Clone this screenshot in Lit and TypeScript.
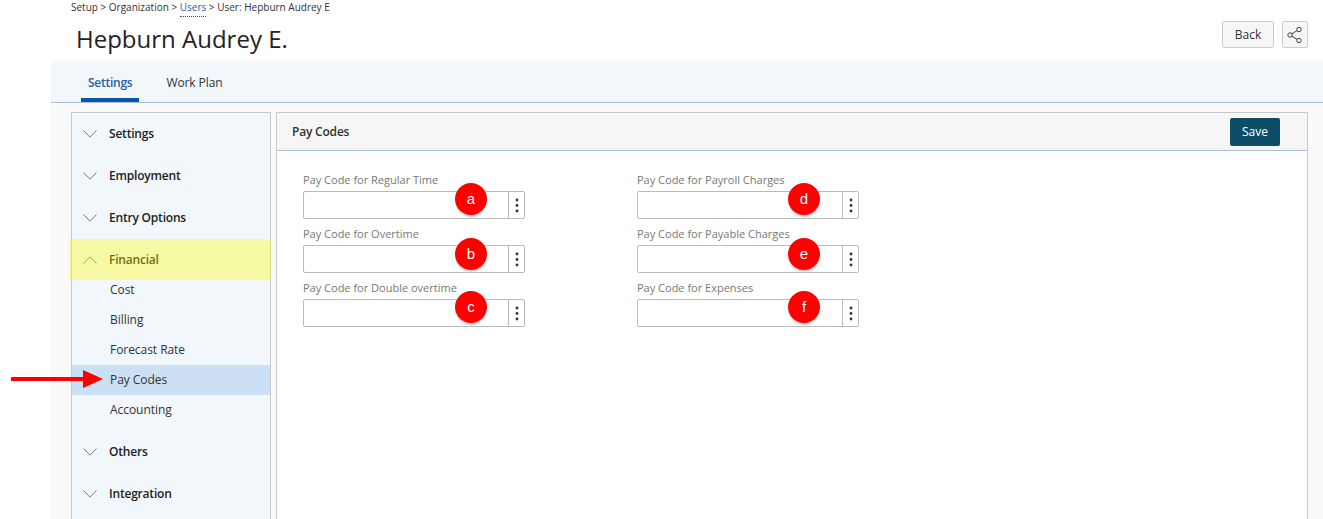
import { LitElement, html, css, svg } from "lit";
import { customElement } from "lit/decorators.js";

const chevron = (up: boolean) => html`<svg class="chev" width="14" height="8" viewBox="0 0 14 8">
  <path d=${up ? "M.5 7.5 7 .8l6.500 6.700" : "M.5.5 7 7.200 13.500.5"} fill="none" stroke="#7a7a7a" stroke-width="1"></path>
</svg>`;

const dots = svg`<circle cx="2" cy="2" r="1.400"/><circle cx="2" cy="7.500" r="1.400"/><circle cx="2" cy="13" r="1.400"/>`;

@customElement("app-root")
export class AppRoot extends LitElement {
  static styles = css`
    :host { display: block; height: 519px; overflow: hidden; position: relative; background: #fff; font-family: "Open Sans", "Liberation Sans", sans-serif; font-size: 12px; color: #222; }
    * { box-sizing: border-box; }
    .top { height: 60px; padding: 0 15px 0 71px; display: flex; justify-content: space-between; align-items: flex-start; }
    .crumbs { font-size: 10px; line-height: 14px; color: #333; white-space: nowrap; }
    .crumbs .link { color: #2a5ea8; border-bottom: 1px dotted #1c5aa8; padding-bottom: 2px; }
    h1 { margin: 7px 0 0 5px; font-size: 24px; font-weight: 400; line-height: 36px; color: #222; }
    .actions { display: flex; gap: 8px; padding-top: 21px; }
    .btn { height: 27px; border: 1px solid #ccc; border-radius: 2px; background: #f6f6f6; display: flex; align-items: center; justify-content: center; color: #333; }
    .back { width: 52px; }
    .share { width: 26px; }
    .body { margin-left: 51px; background: #fafafa; padding-top: 3px; height: 459px; }
    .tabs { height: 40px; background: #f1f7fb; border-bottom: 1px solid #a9bcd8; padding-left: 30px; display: flex; gap: 27px; }
    .tab { height: 39px; padding: 0 7px; display: flex; align-items: center; color: #333; letter-spacing: -.1px; }
    .tab.on { color: #2b5c9e; font-weight: 600; border-bottom: 4px solid #0a55a5; padding-top: 4px; letter-spacing: -.25px; }
    .tab.plain { padding-left: 0; }
    .content { display: flex; padding: 9px 15px 0 20px; gap: 5px; height: 416px; }
    .side { position: relative; width: 200px; flex: none; background: #f1f7fb; border: 1px solid #c8c8c8; border-bottom: 0; }
    .head { height: 42px; padding: 0 0 2px 11px; display: flex; align-items: center; gap: 12px; font-weight: 600; color: #222; letter-spacing: -.2px; }
    .chev { flex: none; margin-top: 2px; }
    .sub { display: block; height: 30px; line-height: 30px; padding-left: 38px; color: #333; letter-spacing: -.05px; }
    .sub.on { background: #cce0f5; }
    .subs { margin: -6px 0 6px; }
    .mark { position: absolute; left: -3px; right: -1px; top: 126px; height: 41px; background: rgba(255, 253, 3, .35); }
    .main { flex: 1; background: #fff; border: 1px solid #c8c8c8; border-bottom: 0; }
    .bar { height: 38px; background: #f6f6f6; border-bottom: 1px solid #a9bcd8; padding: 0 27px 0 15px; display: flex; align-items: center; justify-content: space-between; font-weight: 600; color: #333; letter-spacing: -.2px; }
    .save { width: 50px; height: 28px; margin-top: 1px; padding-bottom: 2px; background: #0e4d66; color: #fff; border-radius: 2px; display: flex; align-items: center; justify-content: center; font-weight: 400; letter-spacing: 0; }
    .grid { display: grid; grid-template-columns: 222px 222px; column-gap: 112px; row-gap: 4px; padding: 18px 0 0 26px; }
    .field { position: relative; }
    .field label { display: block; height: 22px; line-height: 22px; font-size: 11px; color: #777; white-space: nowrap; }
    .box { height: 28px; display: flex; border: 1px solid #bbb; border-radius: 2px; background: #fff; }
    .box input { flex: 1; min-width: 0; border: 0; background: none; padding: 0; outline: none; }
    .more { width: 16px; flex: none; border-left: 1px solid #bbb; display: flex; align-items: center; justify-content: center; }
    .badge { position: absolute; left: 152px; top: 14px; width: 32px; height: 32px; border-radius: 50%; background: #f00; color: #fff; font: 15px/32px "Liberation Sans", Arial, sans-serif; text-align: center; box-shadow: 0 3px 2px -1px #ccc; }
    .badge.right { left: 151px; }
    .badge.mid { top: 15px; }
    .arrow { position: absolute; left: 11px; top: 370px; }
  `;

  private field(label: string, mark: string) {
    const right = "def".includes(mark) ? "right" : "";
    const mid = "be".includes(mark) ? "mid" : "";
    return html`<div class="field">
      <label>${label}</label>
      <div class="box">
        <input type="text" aria-label=${label} />
        <div class="more"><svg width="4" height="15" viewBox="0 0 4 15" fill="#333">${dots}</svg></div>
      </div>
      <span class="badge ${right} ${mid}">${mark}</span>
    </div>`;
  }

  render() {
    return html`
      <div class="top">
        <div>
          <div class="crumbs">Setup &gt; Organization &gt; <span class="link">Users</span> &gt; User: Hepburn Audrey E</div>
          <h1>Hepburn Audrey E.</h1>
        </div>
        <div class="actions">
          <div class="btn back">Back</div>
          <div class="btn share">
            <svg width="18" height="18" viewBox="0 0 18 18" fill="none" stroke="#444" stroke-width="1">
              <path d="M5.800 7.800 11 4.700M5.800 10.200l5.200 3.100"></path>
              <circle cx="13" cy="3.500" r="2.200"></circle>
              <circle cx="4" cy="9" r="2.200"></circle>
              <circle cx="13" cy="14.500" r="2.200"></circle>
            </svg>
          </div>
        </div>
      </div>
      <div class="body">
        <div class="tabs">
          <div class="tab on">Settings</div>
          <div class="tab plain">Work Plan</div>
        </div>
        <div class="content">
          <nav class="side">
            <div class="head">${chevron(false)}Settings</div>
            <div class="head">${chevron(false)}Employment</div>
            <div class="head">${chevron(false)}Entry Options</div>
            <div class="head">${chevron(true)}Financial</div>
            <div class="subs">
              <span class="sub">Cost</span>
              <span class="sub">Billing</span>
              <span class="sub">Forecast Rate</span>
              <span class="sub on">Pay Codes</span>
              <span class="sub">Accounting</span>
            </div>
            <div class="head">${chevron(false)}Others</div>
            <div class="head">${chevron(false)}Integration</div>
            <div class="mark"></div>
          </nav>
          <section class="main">
            <div class="bar"><span>Pay Codes</span><div class="save">Save</div></div>
            <div class="grid">
              ${this.field("Pay Code for Regular Time", "a")}
              ${this.field("Pay Code for Payroll Charges", "d")}
              ${this.field("Pay Code for Overtime", "b")}
              ${this.field("Pay Code for Payable Charges", "e")}
              ${this.field("Pay Code for Double overtime", "c")}
              ${this.field("Pay Code for Expenses", "f")}
            </div>
          </section>
        </div>
      </div>
      <svg class="arrow" width="92" height="18" viewBox="0 0 92 18">
        <path d="M0 7h72V0l20 9-20 9v-7H0z" fill="#f00"></path>
      </svg>
    `;
  }
}
